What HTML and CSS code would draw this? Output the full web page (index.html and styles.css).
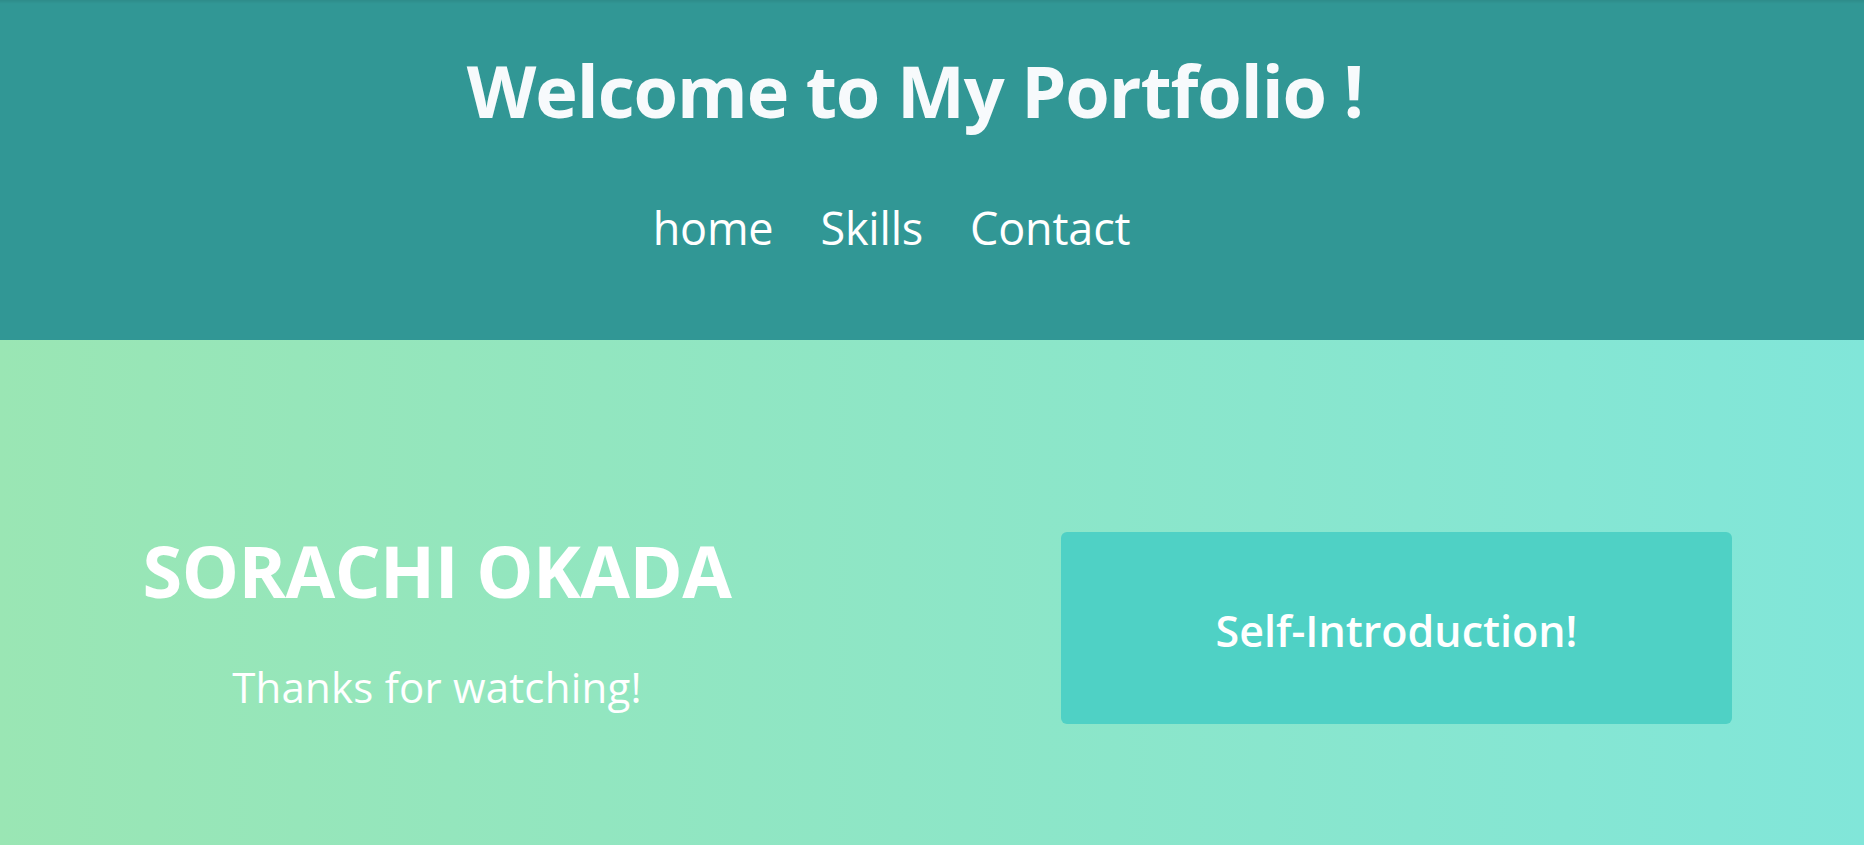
FILE: index.html
```html
<!DOCTYPE html>
<html lang="en">
<head>
<meta charset="utf-8">
<title>Portfolio</title>
<link rel="stylesheet" href="styles.css">
</head>
<body>
<header class="site-header">
  <h1 class="site-title">Welcome to My Portfolio !</h1>
  <nav class="site-nav">
    <a class="nav-link" href="#home">home</a>
    <a class="nav-link" href="#skills">Skills</a>
    <a class="nav-link" href="#contact">Contact</a>
  </nav>
</header>
<main class="hero">
  <div class="hero-left">
    <h2 class="hero-name">SORACHI OKADA</h2>
    <p class="hero-sub">Thanks for watching!</p>
  </div>
  <div class="hero-card">Self-Introduction!</div>
</main>
</body>
</html>
```
FILE: styles.css
```css
* { box-sizing: border-box; }
html, body { margin: 0; padding: 0; }
body {
  font-family: "Open Sans", "Noto Sans", sans-serif;
  color: #ffffff;
  overflow: hidden;
  height: 845px;
  background: linear-gradient(to right, #9ae6b4, #81e6d9);
}
.site-header {
  height: 340px;
  background: linear-gradient(to bottom, rgba(0,0,0,0.08), rgba(0,0,0,0) 4px), #319795;
  padding: 54px 34px 0 0;
  display: flex;
  flex-direction: column;
  align-items: center;
}
.site-title {
  margin: 0;
  font-size: 72px;
  line-height: 72px;
  font-weight: 700;
  color: #f7fafc;
  letter-spacing: -1.1px;
}
.site-nav {
  margin-top: 79px;
  display: flex;
}
.nav-link {
  color: #ffffff;
  text-decoration: none;
  font-size: 45px;
  line-height: 45px;
  margin-right: 47px;
  letter-spacing: -0.2px;
}
.hero {
  display: flex;
  align-items: flex-start;
  padding: 192px 132px 0 132px;
  gap: 319px;
  height: 505px;
}
.hero-left {
  width: 610px;
  flex: none;
  text-align: center;
}
.hero-name {
  margin: 2px 0 0 0;
  font-size: 72px;
  line-height: 72px;
  font-weight: 700;
  white-space: nowrap;
  letter-spacing: -0.5px;
}
.hero-sub {
  margin: 60px 0 0 0;
  font-size: 42px;
  line-height: 42px;
  font-weight: 400;
  letter-spacing: 0.2px;
}
.hero-card {
  flex: 1;
  height: 192px;
  background: #4fd1c5;
  border-radius: 6px;
  display: flex;
  align-items: center;
  justify-content: center;
  font-size: 43px;
  font-weight: 600;
  letter-spacing: 0;
  padding-top: 4px;
}
```
